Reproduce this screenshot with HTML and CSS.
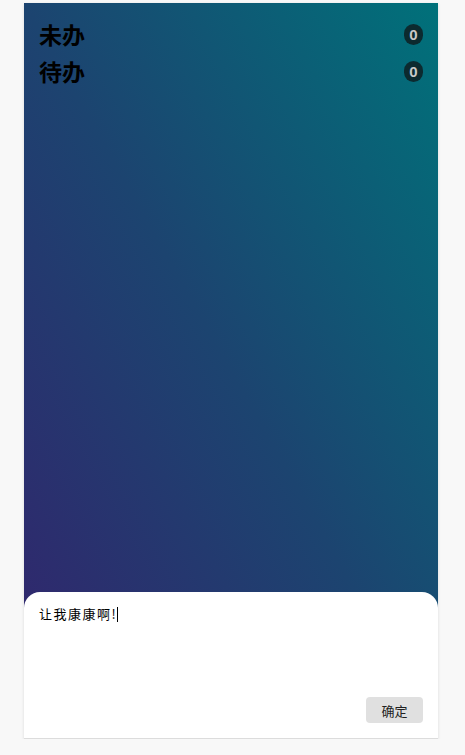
FILE: index.html
```html
<!DOCTYPE html>
<html lang="zh">
<head>
<meta charset="utf-8">
<link rel="stylesheet" href="styles.css">
</head>
<body>
<div class="app">
  <ul class="list">
    <li class="row"><span class="label">未办</span><span class="badge">0</span></li>
    <li class="row"><span class="label">待办</span><span class="badge">0</span></li>
  </ul>
  <div class="panel">
    <div class="input">让我康康啊!<span class="caret"></span></div>
    <div class="actions"><button class="btn">确定</button></div>
  </div>
</div>
</body>
</html>
```
FILE: styles.css
```css
html, body {
  margin: 0;
  padding: 0;
  background: #f8f8f8;
  font-family: "Noto Sans CJK SC", "Noto Sans", sans-serif;
}
.app {
  width: 414px;
  height: 736px;
  margin: 3px 0 0 24px;
  display: flex;
  flex-direction: column;
  background: linear-gradient(to top right, #33236d 0%, #1c4470 50%, #00717a 100%);
  box-shadow: 0 1px 3px rgba(0,0,0,0.12);
}
.list {
  list-style: none;
  margin: 0;
  padding: 15px 15px 0 15px;
  display: flex;
  flex-direction: column;
  gap: 5px;
}
.row {
  display: flex;
  justify-content: space-between;
  align-items: center;
  height: 32px;
}
.label {
  font-size: 23px;
  font-weight: 700;
  color: #000;
  line-height: 32px;
}
.badge {
  min-width: 19px;
  height: 21px;
  border-radius: 10px;
  background: #0c2a2f;
  color: #c8c8c8;
  font-family: "Liberation Sans", Arial, sans-serif;
  font-weight: 700;
  font-size: 15px;
  display: flex;
  align-items: center;
  justify-content: center;
}
.panel {
  margin-top: auto;
  height: 147px;
  background: #fff;
  border-radius: 16px 16px 0 0;
  border-bottom: 1px solid #dcdcdc;
  padding: 11px 15px 15px 15px;
  box-sizing: border-box;
  display: flex;
  flex-direction: column;
}
.input {
  font-size: 13px;
  letter-spacing: 1.5px;
  color: #000;
  line-height: 22px;
  flex: 1;
  display: flex;
  align-items: flex-start;
}
.caret {
  display: inline-block;
  width: 1px;
  height: 15px;
  background: #000;
  margin-top: 4px;
}
.actions {
  display: flex;
  justify-content: flex-end;
}
.btn {
  width: 57px;
  height: 26px;
  border: none;
  border-radius: 4px;
  background: #e0e0e0;
  color: #222;
  font-family: "Noto Sans CJK SC", sans-serif;
  font-size: 13px;
  padding: 0;
}
```
